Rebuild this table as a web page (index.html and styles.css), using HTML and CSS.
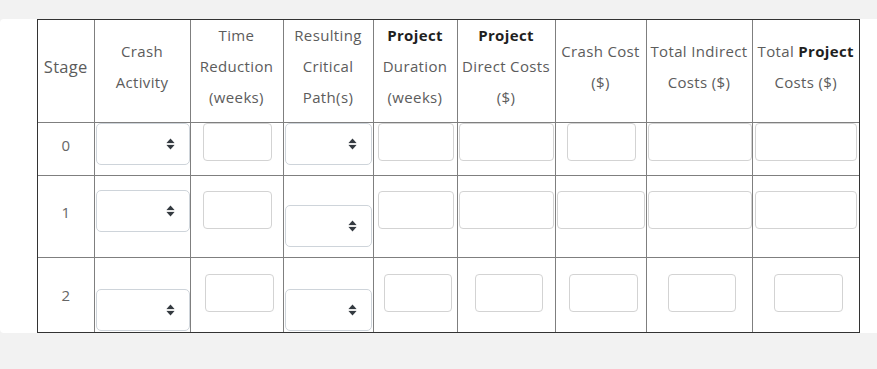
FILE: index.html
```html
<!DOCTYPE html>
<html lang="en">
<head>
<meta charset="utf-8">
<title>Crashing table</title>
<link rel="stylesheet" href="styles.css">
</head>
<body>
<div class="panel">
  <div class="frame">
    <table class="crash">
      <colgroup>
        <col class="c1"><col class="c2"><col class="c3"><col class="c4"><col class="c5"><col class="c6"><col class="c7"><col class="c8"><col class="c9">
      </colgroup>
      <thead>
        <tr>
          <th class="stage-head">Stage</th>
          <th>Crash<br>Activity</th>
          <th>Time<br>Reduction<br>(weeks)</th>
          <th>Resulting<br>Critical<br>Path(s)</th>
          <th><b>Project</b><br>Duration<br>(weeks)</th>
          <th><b>Project</b><br>Direct Costs<br>($)</th>
          <th>Crash Cost<br>($)</th>
          <th>Total Indirect<br>Costs ($)</th>
          <th>Total <b>Project</b><br>Costs ($)</th>
        </tr>
      </thead>
      <tbody>
        <tr class="r0">
          <td class="stage s0">0</td>
          <td><div class="sel ml1 w94"><select></select><svg viewBox="0 0 9 12" width="9" height="12"><path d="M0.5 5 L4.5 0.5 L8.5 5 Z" fill="#343a40"/><rect x="0.5" y="5.6" width="8" height="0.8" fill="#c8c8c8"/><path d="M0.5 7 L8.5 7 L4.5 11.5 Z" fill="#343a40"/></svg></div></td>
          <td><input class="ml12 w69" type="text"></td>
          <td><div class="sel ml1 w87"><select></select><svg viewBox="0 0 9 12" width="9" height="12"><path d="M0.5 5 L4.5 0.5 L8.5 5 Z" fill="#343a40"/><rect x="0.5" y="5.6" width="8" height="0.8" fill="#c8c8c8"/><path d="M0.5 7 L8.5 7 L4.5 11.5 Z" fill="#343a40"/></svg></div></td>
          <td><input class="ml4 w76" type="text"></td>
          <td><input class="ml1 w95" type="text"></td>
          <td><input class="ml11 w69" type="text"></td>
          <td><input class="ml1 w104" type="text"></td>
          <td><input class="ml2 w102" type="text"></td>
        </tr>
        <tr class="r1">
          <td class="stage s1">1</td>
          <td><div class="sel ml1 w94 mt14"><select></select><svg viewBox="0 0 9 12" width="9" height="12"><path d="M0.5 5 L4.5 0.5 L8.5 5 Z" fill="#343a40"/><rect x="0.5" y="5.6" width="8" height="0.8" fill="#c8c8c8"/><path d="M0.5 7 L8.5 7 L4.5 11.5 Z" fill="#343a40"/></svg></div></td>
          <td><input class="ml12 w69 mt15" type="text"></td>
          <td><div class="sel ml1 w87 mt29"><select></select><svg viewBox="0 0 9 12" width="9" height="12"><path d="M0.5 5 L4.5 0.5 L8.5 5 Z" fill="#343a40"/><rect x="0.5" y="5.6" width="8" height="0.8" fill="#c8c8c8"/><path d="M0.5 7 L8.5 7 L4.5 11.5 Z" fill="#343a40"/></svg></div></td>
          <td><input class="ml4 w76 mt15" type="text"></td>
          <td><input class="ml1 w95 mt15" type="text"></td>
          <td><input class="ml1 w88 mt15" type="text"></td>
          <td><input class="ml1 w104 mt15" type="text"></td>
          <td><input class="ml2 w102 mt15" type="text"></td>
        </tr>
        <tr class="r2">
          <td class="stage s2">2</td>
          <td><div class="sel ml1 w94 mt31"><select></select><svg viewBox="0 0 9 12" width="9" height="12"><path d="M0.5 5 L4.5 0.5 L8.5 5 Z" fill="#343a40"/><rect x="0.5" y="5.6" width="8" height="0.8" fill="#c8c8c8"/><path d="M0.5 7 L8.5 7 L4.5 11.5 Z" fill="#343a40"/></svg></div></td>
          <td><input class="ml14 w69 mt16" type="text"></td>
          <td><div class="sel ml1 w87 mt31"><select></select><svg viewBox="0 0 9 12" width="9" height="12"><path d="M0.5 5 L4.5 0.5 L8.5 5 Z" fill="#343a40"/><rect x="0.5" y="5.6" width="8" height="0.8" fill="#c8c8c8"/><path d="M0.5 7 L8.5 7 L4.5 11.5 Z" fill="#343a40"/></svg></div></td>
          <td><input class="ml10 w68 mt16" type="text"></td>
          <td><input class="ml17 w68 mt16" type="text"></td>
          <td><input class="ml13 w69 mt16" type="text"></td>
          <td><input class="ml21 w68 mt16" type="text"></td>
          <td><input class="ml21 w69 mt16" type="text"></td>
        </tr>
      </tbody>
    </table>
  </div>
</div>
</body>
</html>
```

FILE: styles.css
```css
html, body {
  margin: 0;
  padding: 0;
  background: #f2f2f2;
  font-family: "Open Sans", "DejaVu Sans", sans-serif;
  color: #5c5c5c;
}

.panel {
  margin-top: 19px;
  background: #fff;
  border-radius: 4px 0 0 4px;
  padding-left: 37px;
  height: 314px;
  box-sizing: border-box;
}

.frame {
  width: 823px;
  border: 1px solid #333;
  box-sizing: border-box;
}

.crash {
  width: 821px;
  table-layout: fixed;
  border-collapse: collapse;
  border-style: hidden;
}

.c1 { width: 56px; }
.c2 { width: 96px; }
.c3 { width: 93px; }
.c4 { width: 90px; }
.c5 { width: 84px; }
.c6 { width: 98px; }
.c7 { width: 91px; }
.c8 { width: 106px; }
.c9 { width: 107px; }

.crash th,
.crash td {
  border: 1px solid #7f7f7f;
}

.crash th {
  font-weight: 400;
  font-size: 15px;
  letter-spacing: 0.35px;
  line-height: 31px;
  white-space: nowrap;
  text-align: center;
  vertical-align: middle;
  padding: 0 0 9px;
  height: 93px;
  color: #5c5c5c;
}

.crash th.stage-head {
  font-size: 16.5px;
  letter-spacing: 0.3px;
}

.crash th b {
  font-weight: 700;
  color: #1f1f1f;
}

.crash td {
  padding: 0;
  vertical-align: top;
  text-align: left;
}

.r0 td { height: 52px; }
.r1 td { height: 81px; }
.r2 td { height: 74px; }

.stage {
  text-align: center !important;
  font-size: 15px;
  line-height: 20px;
  color: #666;
}
.s0 { padding-top: 12px !important; height: 40px !important; }
.s1 { padding-top: 26px !important; height: 55px !important; }
.s2 { padding-top: 27px !important; height: 47px !important; }

input {
  display: block;
  box-sizing: border-box;
  height: 38px;
  margin: 0;
  padding: 0 6px;
  border: 1px solid #d3d3d3;
  border-radius: 4px;
  background: #fff;
  font: inherit;
  outline: none;
}

.sel {
  position: relative;
  height: 42px;
  box-sizing: border-box;
}

.sel select {
  display: block;
  width: 100%;
  height: 100%;
  margin: 0;
  box-sizing: border-box;
  -webkit-appearance: none;
  appearance: none;
  border: 1px solid #ced4da;
  border-radius: 5px;
  background: #fff;
  font: inherit;
}

.sel svg {
  position: absolute;
  right: 15px;
  top: 15px;
  pointer-events: none;
}

.ml1 { margin-left: 1px; }
.ml2 { margin-left: 2px; }
.ml4 { margin-left: 4px; }
.ml10 { margin-left: 10px; }
.ml11 { margin-left: 11px; }
.ml12 { margin-left: 12px; }
.ml13 { margin-left: 13px; }
.ml14 { margin-left: 14px; }
.ml17 { margin-left: 17px; }
.ml21 { margin-left: 21px; }

.mt14 { margin-top: 14px; }
.mt15 { margin-top: 15px; }
.mt16 { margin-top: 16px; }
.mt29 { margin-top: 29px; }
.mt31 { margin-top: 31px; }

.w68 { width: 68px; }
.w69 { width: 69px; }
.w76 { width: 76px; }
.w87 { width: 87px; }
.w88 { width: 88px; }
.w94 { width: 94px; }
.w95 { width: 95px; }
.w102 { width: 102px; }
.w104 { width: 104px; }
```
